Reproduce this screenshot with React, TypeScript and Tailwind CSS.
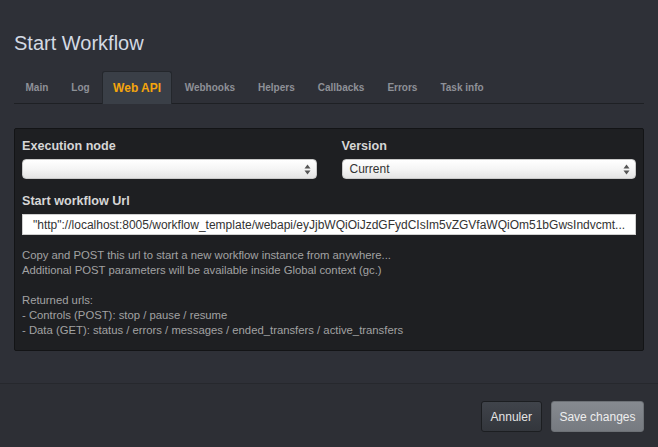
const tabs = ['Main', 'Log', 'Web API', 'Webhooks', 'Helpers', 'Callbacks', 'Errors', 'Task info'];

const url = '"http"://localhost:8005/workflow_template/webapi/eyJjbWQiOiJzdGFydCIsIm5vZGVfaWQiOm51bGwsIndvcmt...';

const SelectArrows = () => (
  <svg width="7" height="11" viewBox="0 0 7 11" className="shrink-0">
    <path d="M3.5 0.5 L6.5 4.5 L0.5 4.5 Z" fill="#555" />
    <path d="M3.5 10.5 L6.5 6.5 L0.5 6.5 Z" fill="#555" />
  </svg>
);

const FakeSelect = ({ value }: { value?: string }) => (
  <div className="flex h-[20px] items-center justify-between rounded-[4px] border border-[#c9c9c9] bg-gradient-to-b from-white via-[#f5f5f5] to-[#e4e4e4] pl-[7px] pr-[5px] text-[12px] text-[#333]">
    <span>{value ?? ''}</span>
    <SelectArrows />
  </div>
);

export default function App() {
  return (
    <div
      className="flex h-[447px] w-[658px] flex-col overflow-hidden bg-[#2e3037]"
      style={{ fontFamily: '"Liberation Sans", Arial, sans-serif' }}
    >
      <div className="px-[14px] pt-[29px]">
        <h1 className="text-[20px] leading-[28px] text-[#d3d9e3]">Start Workflow</h1>

        <div className="mt-[14px] flex border-b border-[#1e2024]">
          {tabs.map((t) => {
            const active = t === 'Web API';
            return (
              <div
                key={t}
                className={
                  active
                    ? 'mx-[1px] -mb-[1px] flex h-[33px] items-center rounded-t-[3px] border border-b-0 border-[#24272c] bg-[#3a3f47] px-[10px] text-[12px] font-bold text-[#f5a50d]'
                    : 'flex h-[32px] items-center px-[11.5px] text-[10px] font-bold text-[#8e9197]'
                }
              >
                {t}
              </div>
            );
          })}
        </div>

        <div className="mt-[24px] rounded-[2px] border border-[#131416] bg-[#1e1f22] px-[7px] pt-[9px] pb-[12px]">
          <div className="grid grid-cols-2 gap-x-[25px]">
            <div>
              <div className="text-[12.6px] font-bold leading-[17px] text-[#d6d6d6]">Execution node</div>
              <div className="mt-[4px]">
                <FakeSelect />
              </div>
            </div>
            <div>
              <div className="text-[12.6px] font-bold leading-[17px] text-[#d6d6d6]">Version</div>
              <div className="mt-[4px]">
                <FakeSelect value="Current" />
              </div>
            </div>
          </div>

          <div className="mt-[14px] text-[12.6px] font-bold leading-[17px] text-[#d6d6d6]">Start workflow Url</div>
          <div className="mt-[4px] flex h-[21px] items-center border border-[#cfcfcf] bg-white px-[10px] text-[12px] text-[#333]">
            <span className="whitespace-nowrap">{url}</span>
          </div>

          <div className="mt-[13px] text-[11.3px] leading-[15px] text-[#a2a2a2]">
            <p>Copy and POST this url to start a new workflow instance from anywhere...</p>
            <p>Additional POST parameters will be available inside Global context (gc.)</p>
            <p className="mt-[15px]">Returned urls:</p>
            <p>- Controls (POST): stop / pause / resume</p>
            <p>- Data (GET): status / errors / messages / ended_transfers / active_transfers</p>
          </div>
        </div>
      </div>

      <div className="mt-[32px] flex flex-1 items-start justify-end gap-[9px] border-t border-[#26282d] bg-[#2d2f35] px-[14px] pt-[17px]">
        <button className="h-[31px] rounded-[3px] border border-[#1c1e21] bg-gradient-to-b from-[#40444b] to-[#33363c] px-[9px] text-[12px] text-[#e4e4e4]">
          Annuler
        </button>
        <button className="h-[31px] rounded-[3px] border border-[#6d7176] bg-gradient-to-b from-[#868a90] to-[#767a80] px-[7.5px] text-[12px] text-[#eeeeee]">
          Save changes
        </button>
      </div>
    </div>
  );
}
